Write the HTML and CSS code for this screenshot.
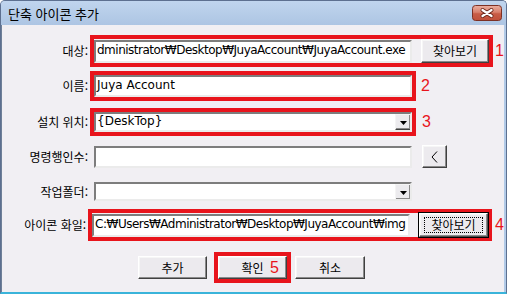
FILE: index.html
```html
<!DOCTYPE html>
<html lang="ko">
<head>
<meta charset="utf-8">
<link rel="stylesheet" href="styles.css">
</head>
<body>
<div class="window">
  <div class="titlebar">
    <span class="title">단축 아이콘 추가</span>
    <span class="close">
      <svg width="30" height="16" viewBox="0 0 30 16">
        <defs>
          <linearGradient id="cg" x1="0" y1="0" x2="0" y2="1">
            <stop offset="0" stop-color="#eab0a2"/>
            <stop offset="0.45" stop-color="#d9806c"/>
            <stop offset="0.55" stop-color="#c85c46"/>
            <stop offset="1" stop-color="#c0503a"/>
          </linearGradient>
        </defs>
        <rect x="0.5" y="0.5" width="29" height="15" rx="3" fill="url(#cg)" stroke="#7c3024"/>
        <path d="M10.5 5 L19.5 11 M19.5 5 L10.5 11" stroke="#6a2418" stroke-width="4" stroke-linecap="round"/>
        <path d="M10.5 5 L19.5 11 M19.5 5 L10.5 11" stroke="#ffffff" stroke-width="2.3" stroke-linecap="round"/>
      </svg>
    </span>
  </div>
  <div class="client">
    <div class="row row-1">
      <span class="lbl">대상:</span>
      <div class="box marked">
        <div class="field tall">dministrator₩Desktop₩JuyaAccount₩JuyaAccount.exe</div>
        <span class="btn browse">찾아보기</span>
      </div>
      <span class="num num-1">1</span>
    </div>
    <div class="row row-2">
      <span class="lbl">이름:</span>
      <div class="box marked">
        <div class="field">Juya Account</div>
      </div>
      <span class="num num-2">2</span>
    </div>
    <div class="row row-3">
      <span class="lbl">설치 위치:</span>
      <div class="box marked">
        <div class="field select">
          <span class="sel-text">{DeskTop}</span>
          <span class="drop"><svg width="7" height="4" viewBox="0 0 7 4"><path d="M0 0 H7 L3.5 4 Z" fill="#000"/></svg></span>
        </div>
      </div>
      <span class="num num-3">3</span>
    </div>
    <div class="row row-4">
      <span class="lbl">명령행인수:</span>
      <div class="box">
        <div class="field"></div>
        <span class="btn arrow"><svg width="7" height="12" viewBox="0 0 7 12"><path d="M6 0.5 L1 6 L6 11.5" fill="none" stroke="#000" stroke-width="1"/></svg></span>
      </div>
    </div>
    <div class="row row-5">
      <span class="lbl">작업폴더:</span>
      <div class="box">
        <div class="field select short">
          <span class="sel-text"></span>
          <span class="drop"><svg width="7" height="4" viewBox="0 0 7 4"><path d="M0 0 H7 L3.5 4 Z" fill="#000"/></svg></span>
        </div>
      </div>
    </div>
    <div class="row row-6">
      <span class="lbl">아이콘 화일:</span>
      <div class="box marked">
        <div class="field tall">C:₩Users₩Administrator₩Desktop₩JuyaAccount₩img</div>
        <span class="btn browse default"><span class="focus">찾아보기</span></span>
      </div>
      <span class="num num-4">4</span>
    </div>
    <div class="actions">
      <span class="btn action">추가</span>
      <div class="ok-box">
        <span class="btn action">확인</span>
        <span class="num num-5">5</span>
      </div>
      <span class="btn action cancel">취소</span>
    </div>
  </div>
</div>
</body>
</html>
```

FILE: styles.css
```css
html, body {
  margin: 0;
  padding: 0;
  background: #ffffff;
}

.window {
  width: 507px;
  height: 294px;
  box-sizing: border-box;
  display: flex;
  flex-direction: column;
  background: #b2cae7;
  border: 1px solid #5d7090;
  border-bottom: 2px solid #3ab4da;
  border-radius: 5px 5px 0 0;
  overflow: hidden;
}

.titlebar {
  height: 24px;
  flex: none;
  display: flex;
  align-items: center;
  padding: 0 4px 0 7px;
  background: linear-gradient(#c0d5ee, #adc5e3);
}

.title {
  flex: 1;
  font-family: "Noto Sans CJK KR", sans-serif;
  font-size: 13px;
  color: #000;
  line-height: 16px;
  margin-top: 2px;
}

.close {
  width: 30px;
  height: 16px;
  display: block;
}

.close svg {
  display: block;
}

.client {
  flex: 1;
  margin-right: 2px;
  background: #f1eff3;
  border-left: 1px solid #6f8098;
  padding-top: 10px;
  font-family: "Noto Sans CJK KR", sans-serif;
  font-size: 12px;
  color: #000;
}

.row {
  display: flex;
  align-items: center;
}

.row-2 { margin-top: 4px; }
.row-3 { margin-top: 7px; }
.row-4 { margin-top: 5px; }
.row-5 { margin-top: 6px; }
.row-6 { margin-top: 4px; }

.lbl {
  width: 86px;
  margin-right: 2px;
  text-align: right;
  white-space: nowrap;
  line-height: 14px;
}

.box {
  display: flex;
  align-items: center;
  border: 4px solid transparent;
}

.box.marked {
  border-color: #e8141c;
}

.field {
  width: 318px;
  height: 22px;
  box-sizing: border-box;
  background: #ffffff;
  border: 2px solid;
  border-color: #7d7d7d #ebebeb #ebebeb #7d7d7d;
  padding-left: 1px;
  font-family: "DejaVu Sans", "Noto Sans CJK KR", sans-serif;
  font-size: 12px;
  line-height: 16px;
  white-space: nowrap;
  overflow: hidden;
}

.field.tall {
  height: 23px;
  letter-spacing: -0.5px;
}

.field.select {
  height: 20px;
  display: flex;
  align-items: flex-start;
  padding-right: 0;
}

.field.select.short {
  height: 19px;
}

.sel-text {
  flex: 1;
  line-height: 14px;
}

.drop {
  width: 16px;
  height: 16px;
  box-sizing: border-box;
  display: flex;
  align-items: center;
  justify-content: center;
  background: #ecebee;
  border: 1px solid;
  border-color: #f4f4f4 #404040 #404040 #f4f4f4;
  box-shadow: inset -1px -1px 0 #8a8a8a;
  margin-right: -1px;
}

.drop svg {
  display: block;
  margin-top: 1px;
}

.btn {
  display: flex;
  align-items: center;
  justify-content: center;
  box-sizing: border-box;
  background: #eceaee;
  border: 1px solid;
  border-color: #ffffff #404040 #404040 #ffffff;
  box-shadow: inset -1px -1px 0 #8a8a8a, inset 1px 1px 0 #f6f6f6;
  font-family: "Noto Sans CJK KR", sans-serif;
  font-size: 12px;
  line-height: 14px;
  white-space: nowrap;
}

.browse {
  width: 68px;
  height: 24px;
  margin-left: 9px;
}

.browse.default {
  width: 69px;
  outline: 1px solid #000;
  outline-offset: 0;
  border-color: #ffffff #505050 #505050 #ffffff;
}

.focus {
  display: flex;
  align-items: center;
  justify-content: center;
  width: 59px;
  height: 16px;
  box-sizing: border-box;
  border: 1px dotted #000;
}

.arrow {
  width: 25px;
  height: 23px;
  margin-left: 10px;
}

.arrow svg {
  display: block;
}

.num {
  color: #e8141c;
  font-family: "Liberation Sans", sans-serif;
  font-size: 16px;
  line-height: 16px;
}

.num-1 { margin-left: 2px; }
.num-2 { margin-left: 5px; }
.num-3 { margin-left: 6px; }
.num-4 { margin-left: 3px; }

.actions {
  display: flex;
  align-items: center;
  margin-top: 11px;
  padding-left: 136px;
}

.action {
  width: 69px;
  height: 23px;
}

.ok-box {
  position: relative;
  margin-left: 7px;
  border: 4px solid #e8141c;
}

.num-5 {
  position: absolute;
  left: 52px;
  top: 4px;
}

.cancel {
  width: 70px;
  margin-left: 4px;
}
```
